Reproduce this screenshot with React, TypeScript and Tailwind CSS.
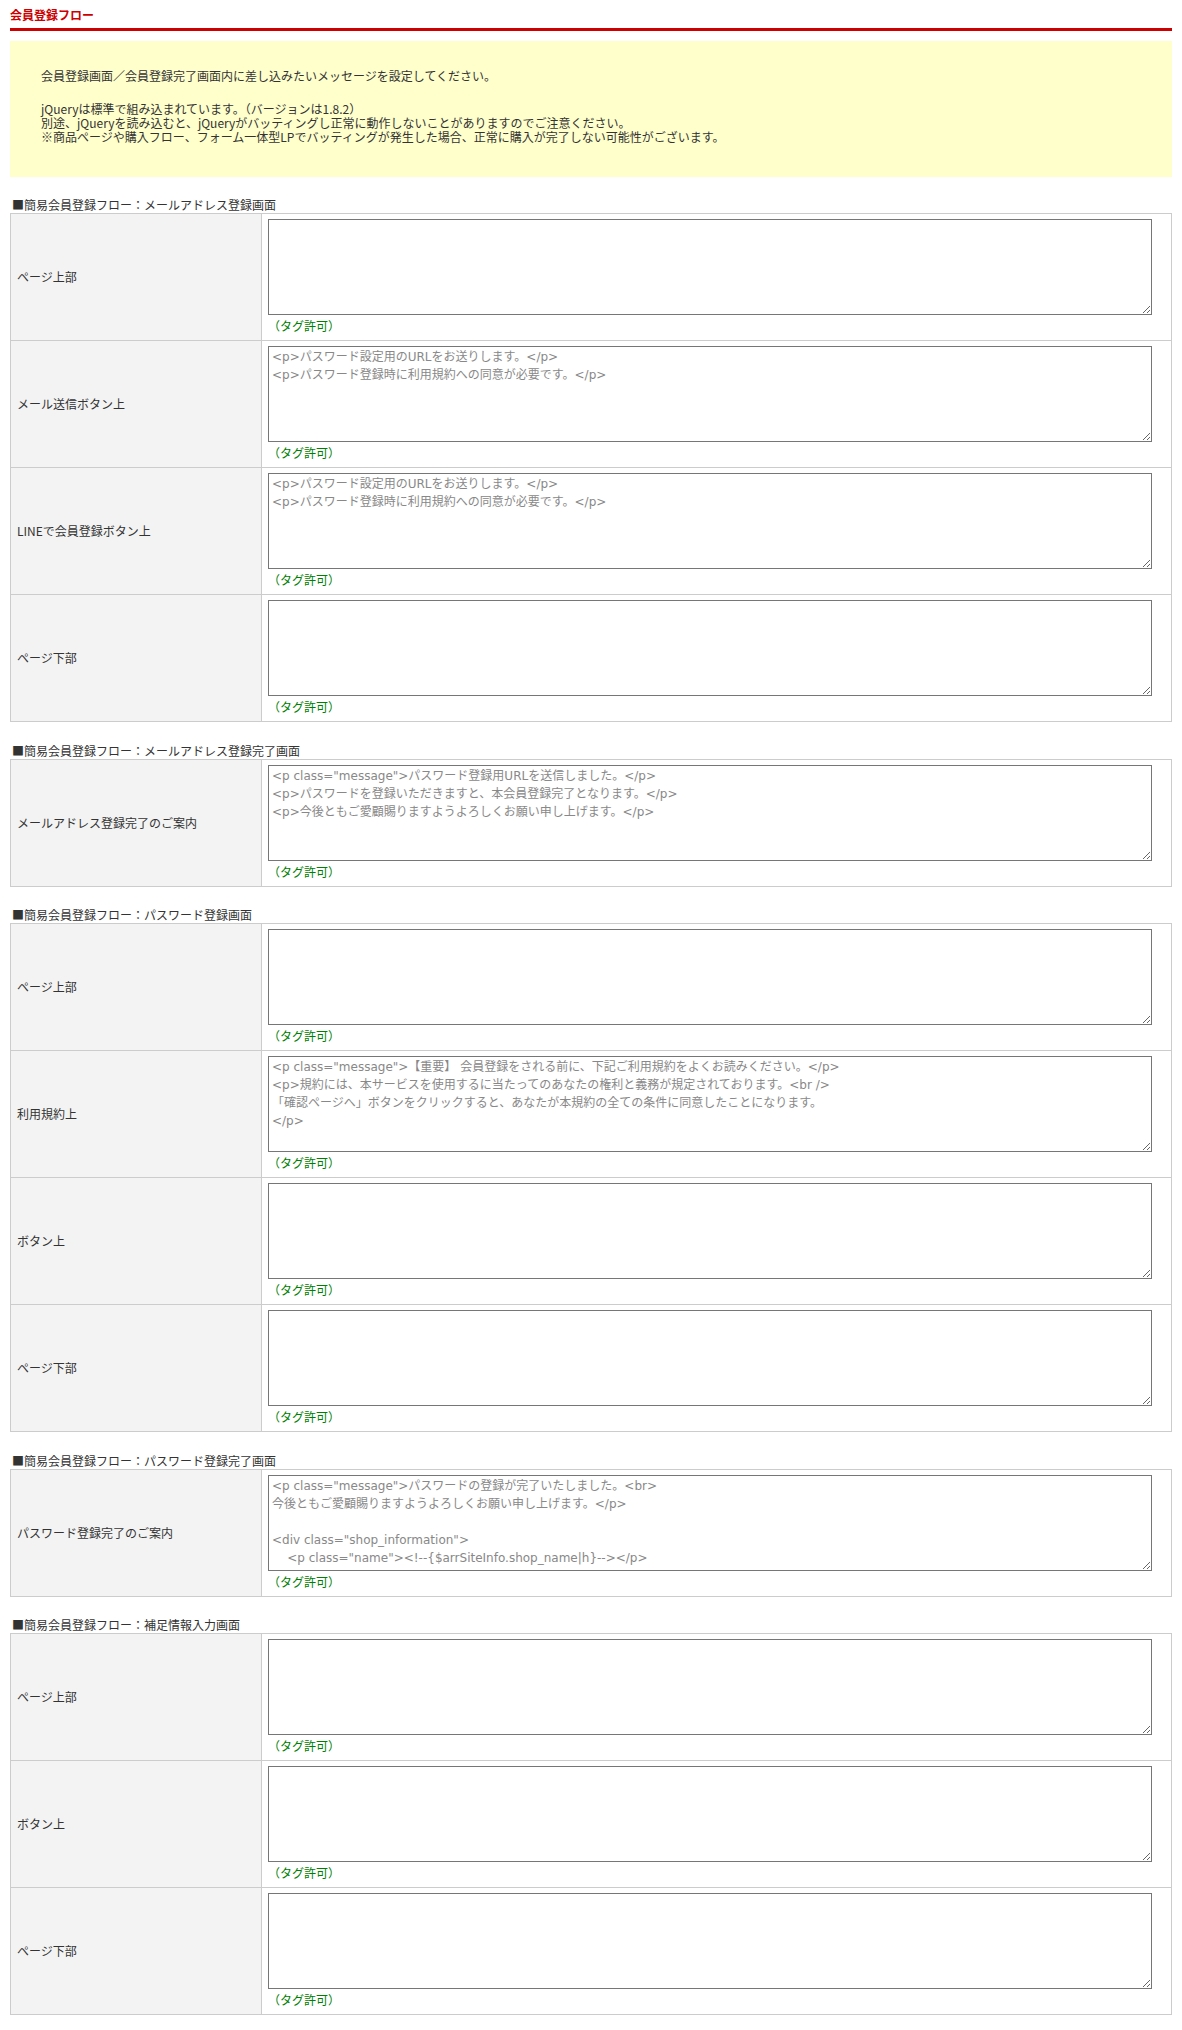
import React from "react";

type Row = { label: string; value: string };
type Section = { title: string; rows: Row[] };

const mailMsg =
  "<p>パスワード設定用のURLをお送りします。</p>\n<p>パスワード登録時に利用規約への同意が必要です。</p>";

const sections: Section[] = [
  {
    title: "■簡易会員登録フロー：メールアドレス登録画面",
    rows: [
      { label: "ページ上部", value: "" },
      { label: "メール送信ボタン上", value: mailMsg },
      { label: "LINEで会員登録ボタン上", value: mailMsg },
      { label: "ページ下部", value: "" },
    ],
  },
  {
    title: "■簡易会員登録フロー：メールアドレス登録完了画面",
    rows: [
      {
        label: "メールアドレス登録完了のご案内",
        value:
          '<p class="message">パスワード登録用URLを送信しました。</p>\n<p>パスワードを登録いただきますと、本会員登録完了となります。</p>\n<p>今後ともご愛顧賜りますようよろしくお願い申し上げます。</p>',
      },
    ],
  },
  {
    title: "■簡易会員登録フロー：パスワード登録画面",
    rows: [
      { label: "ページ上部", value: "" },
      {
        label: "利用規約上",
        value:
          '<p class="message">【重要】 会員登録をされる前に、下記ご利用規約をよくお読みください。</p>\n<p>規約には、本サービスを使用するに当たってのあなたの権利と義務が規定されております。<br />\n「確認ページへ」ボタンをクリックすると、あなたが本規約の全ての条件に同意したことになります。\n</p>',
      },
      { label: "ボタン上", value: "" },
      { label: "ページ下部", value: "" },
    ],
  },
  {
    title: "■簡易会員登録フロー：パスワード登録完了画面",
    rows: [
      {
        label: "パスワード登録完了のご案内",
        value:
          '<p class="message">パスワードの登録が完了いたしました。<br>\n今後ともご愛顧賜りますようよろしくお願い申し上げます。</p>\n\n<div class="shop_information">\n    <p class="name"><!--{$arrSiteInfo.shop_name|h}--></p>',
      },
    ],
  },
  {
    title: "■簡易会員登録フロー：補足情報入力画面",
    rows: [
      { label: "ページ上部", value: "" },
      { label: "ボタン上", value: "" },
      { label: "ページ下部", value: "" },
    ],
  },
];

const font = { fontFamily: '"Noto Sans CJK JP", "Liberation Sans", sans-serif' };
const wideFont = { fontFamily: '"DejaVu Sans", "Noto Sans CJK JP", sans-serif' };

function FormRow({ row, first }: { row: Row; first: boolean }) {
  return (
    <div className={first ? "flex" : "flex border-t border-[#cccccc]"}>
      <div className="w-[251px] shrink-0 bg-[#f2f3f2] border-r border-[#cccccc] flex items-center pl-[6px] text-[12px] leading-[16px] text-[#333333]">
        {row.label}
      </div>
      <div className="flex-1 pl-[6px] pt-[5px] pb-[5px]">
        <textarea
          className="block w-[884px] h-[96px] border border-[#767676] bg-white px-[3px] py-[1px] text-[12px] leading-[18px] text-[#888888] overflow-hidden outline-none"
          style={wideFont}
          defaultValue={row.value}
        />
        <div className="mt-[2px] text-[12px] leading-[18px] text-[#008000]">（タグ許可）</div>
      </div>
    </div>
  );
}

export default function App() {
  return (
    <div className="bg-white px-[10px] pt-[8px] pb-[13px] text-[12px] text-[#333333]" style={font}>
      <h2 className="text-[#cc0000] font-bold text-[12px] leading-[13px] pb-[7px] border-b-[3px] border-[#cc0000]">
        会員登録フロー
      </h2>
      <div className="mt-[10px] bg-[#ffffcc] pl-[31px] pr-[20px] pt-[28px] pb-[33px] text-[12px] leading-[14px] text-[#333333]">
        <p>会員登録画面／会員登録完了画面内に差し込みたいメッセージを設定してください。</p>
        <p className="mt-[19px]">jQueryは標準で組み込まれています。（バージョンは1.8.2）</p>
        <p>別途、jQueryを読み込むと、jQueryがバッティングし正常に動作しないことがありますのでご注意ください。</p>
        <p>※商品ページや購入フロー、フォーム一体型LPでバッティングが発生した場合、正常に購入が完了しない可能性がございます。</p>
      </div>
      {sections.map((s, i) => (
        <div key={i} className={i % 2 === 0 ? "mt-[19px]" : "mt-[20px]"}>
          <div className="pl-[2px] text-[12px] leading-[17px] text-[#333333]">{s.title}</div>
          <div className="border border-[#cccccc]">
            {s.rows.map((r, j) => (
              <FormRow key={j} row={r} first={j === 0} />
            ))}
          </div>
        </div>
      ))}
    </div>
  );
}
